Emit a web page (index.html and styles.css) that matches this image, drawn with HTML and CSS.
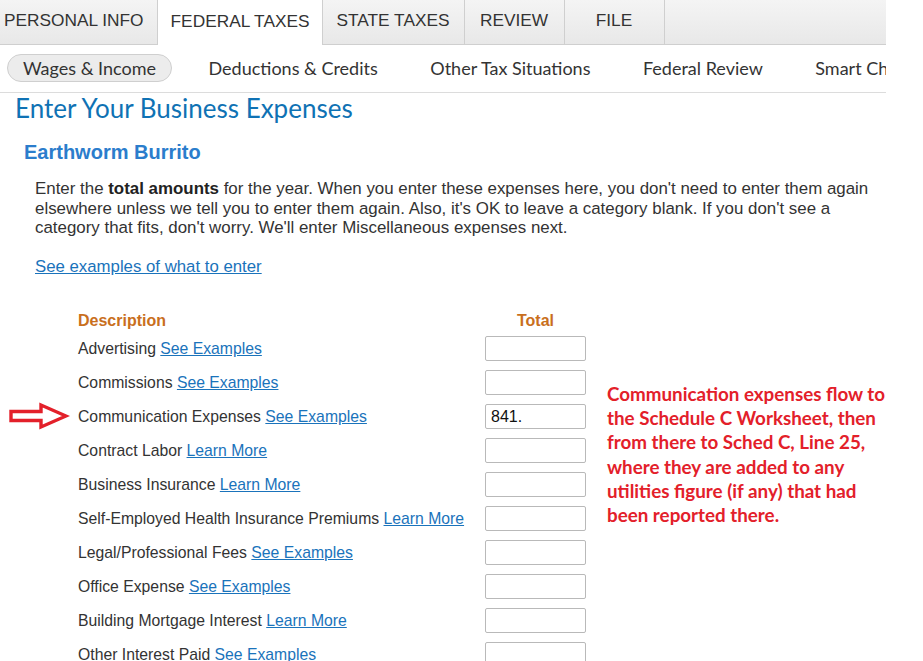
FILE: index.html
```html
<!DOCTYPE html>
<html>
<head>
<meta charset="utf-8">
<link rel="stylesheet" href="styles.css">
</head>
<body>
<div class="page">
  <nav class="tabs">
    <div class="tab first">PERSONAL INFO</div>
    <div class="tab active">FEDERAL TAXES</div>
    <div class="tab state">STATE TAXES</div>
    <div class="tab wide">REVIEW</div>
    <div class="tab wide">FILE</div>
  </nav>
  <nav class="subnav">
    <div class="sub pill">Wages &amp; Income</div>
    <div class="sub">Deductions &amp; Credits</div>
    <div class="sub">Other Tax Situations</div>
    <div class="sub">Federal Review</div>
    <div class="sub">Smart Check</div>
  </nav>
  <main class="content">
    <h1 class="title">Enter Your Business Expenses</h1>
    <h2 class="biz">Earthworm Burrito</h2>
    <p class="intro">Enter the <b>total amounts</b> for the year. When you enter these expenses here, you don't need to enter them again elsewhere unless we tell you to enter them again. Also, it's OK to leave a category blank. If you don't see a category that fits, don't worry. We'll enter Miscellaneous expenses next.</p>
    <p class="examples"><a href="#">See examples of what to enter</a></p>
    <div class="grid">
      <div class="head">Description</div>
      <div class="head center">Total</div>

      <div class="label">Advertising <a href="#">See Examples</a></div>
      <div class="cell"><div class="input"></div></div>

      <div class="label">Commissions <a href="#">See Examples</a></div>
      <div class="cell"><div class="input"></div></div>

      <div class="label">Communication Expenses <a href="#">See Examples</a></div>
      <div class="cell"><div class="input">841.</div></div>

      <div class="label">Contract Labor <a href="#">Learn More</a></div>
      <div class="cell"><div class="input"></div></div>

      <div class="label">Business Insurance <a href="#">Learn More</a></div>
      <div class="cell"><div class="input"></div></div>

      <div class="label">Self-Employed Health Insurance Premiums <a href="#">Learn More</a></div>
      <div class="cell"><div class="input"></div></div>

      <div class="label">Legal/Professional Fees <a href="#">See Examples</a></div>
      <div class="cell"><div class="input"></div></div>

      <div class="label">Office Expense <a href="#">See Examples</a></div>
      <div class="cell"><div class="input"></div></div>

      <div class="label">Building Mortgage Interest <a href="#">Learn More</a></div>
      <div class="cell"><div class="input"></div></div>

      <div class="label">Other Interest Paid <a href="#">See Examples</a></div>
      <div class="cell"><div class="input"></div></div>
    </div>
  </main>
  <svg class="arrow" width="62" height="28" viewBox="0 0 62 28">
    <path d="M3 9.5 H33 V3 L58 14 L33 25 V18.5 H3 Z" fill="#fff" stroke="#e3202a" stroke-width="3.4" stroke-linejoin="miter"/>
  </svg>
  <div class="note">Communication expenses flow to the Schedule C Worksheet, then from there to Sched C, Line 25, where they are added to any utilities figure (if any) that had been reported there.</div>
</div>
</body>
</html>
```
FILE: styles.css
```css
html, body {
  margin: 0;
  padding: 0;
  background: #fff;
}
.page {
  position: relative;
  width: 886px;
  height: 661px;
  overflow: hidden;
  font-family: "Liberation Sans", Arial, sans-serif;
  color: #333;
}
.tabs {
  display: flex;
  height: 45px;
  box-sizing: border-box;
  background: linear-gradient(#f4f4f4, #e8e8e8);
  border-bottom: 1px solid #cfcfcf;
}
.tab {
  padding: 0 12px 3px 13px;
  min-width: 100px;
  box-sizing: border-box;
  display: flex;
  align-items: center;
  justify-content: center;
  font-size: 17.3px;
  color: #333;
  border-right: 1px solid #cfcfcf;
  white-space: nowrap;
}
.tab.first {
  margin-left: -10px;
  padding-left: 14px;
  padding-right: 13px;
}
.tab.active {
  background: #fff;
  margin-bottom: -1px;
}
.tab.state {
  padding: 0 14px 3px 14px;
}
.tab.wide {
  width: 100px;
  padding: 0 0 3px;
}
.subnav {
  display: flex;
  align-items: center;
  gap: 20.5px;
  height: 48px;
  padding: 0 0 2px 7px;
  border-bottom: 1px solid #dcdcdc;
  box-sizing: border-box;
  white-space: nowrap;
  font-family: Lato, "Noto Sans", sans-serif;
  font-size: 18px;
  color: #333;
}
.sub {
  padding: 0 15px;
  line-height: 26px;
  border: 1px solid transparent;
  border-radius: 14px;
}
.pill {
  background: #ececec;
  border-color: #cfcfcf;
}
.content {
  padding-left: 15px;
}
.title {
  margin: 0;
  font-family: Lato, "Noto Sans", sans-serif;
  font-weight: 400;
  font-size: 26px;
  line-height: 30px;
  color: #0f72b4;
}
.biz {
  margin: 17px 0 0 9px;
  font-size: 20px;
  line-height: 24px;
  font-weight: 700;
  color: #2b7dcc;
}
.intro {
  margin: 15px 0 0 20px;
  width: 840px;
  font-size: 16.9px;
  line-height: 19.5px;
}
.intro b {
  color: #222;
}
.examples {
  margin: 19px 0 0 20px;
  font-size: 16.8px;
  line-height: 20px;
}
a {
  color: #1a73bb;
  text-decoration: underline;
}
.grid {
  display: grid;
  grid-template-columns: 407px 101px;
  grid-template-rows: 22px;
  grid-auto-rows: 34px;
  margin: 33px 0 0 63px;
  font-size: 15.75px;
}
.head {
  font-weight: 700;
  color: #c96f1d;
  line-height: 22px;
  font-size: 16px;
}
.center {
  text-align: center;
}
.label {
  line-height: 34px;
  white-space: nowrap;
}
.cell {
  display: flex;
  align-items: center;
}
.input {
  width: 101px;
  height: 25px;
  box-sizing: border-box;
  border: 1px solid #b9b9b9;
  border-radius: 2px;
  padding-left: 5px;
  line-height: 23px;
  font-size: 16px;
  color: #111;
  background: #fff;
}
.arrow {
  position: absolute;
  left: 8px;
  top: 402px;
}
.note {
  position: absolute;
  left: 607px;
  top: 382px;
  width: 282px;
  font-family: Lato, "Noto Sans", sans-serif;
  font-weight: 700;
  font-size: 18.8px;
  line-height: 24.2px;
  color: #e3202a;
}
```
